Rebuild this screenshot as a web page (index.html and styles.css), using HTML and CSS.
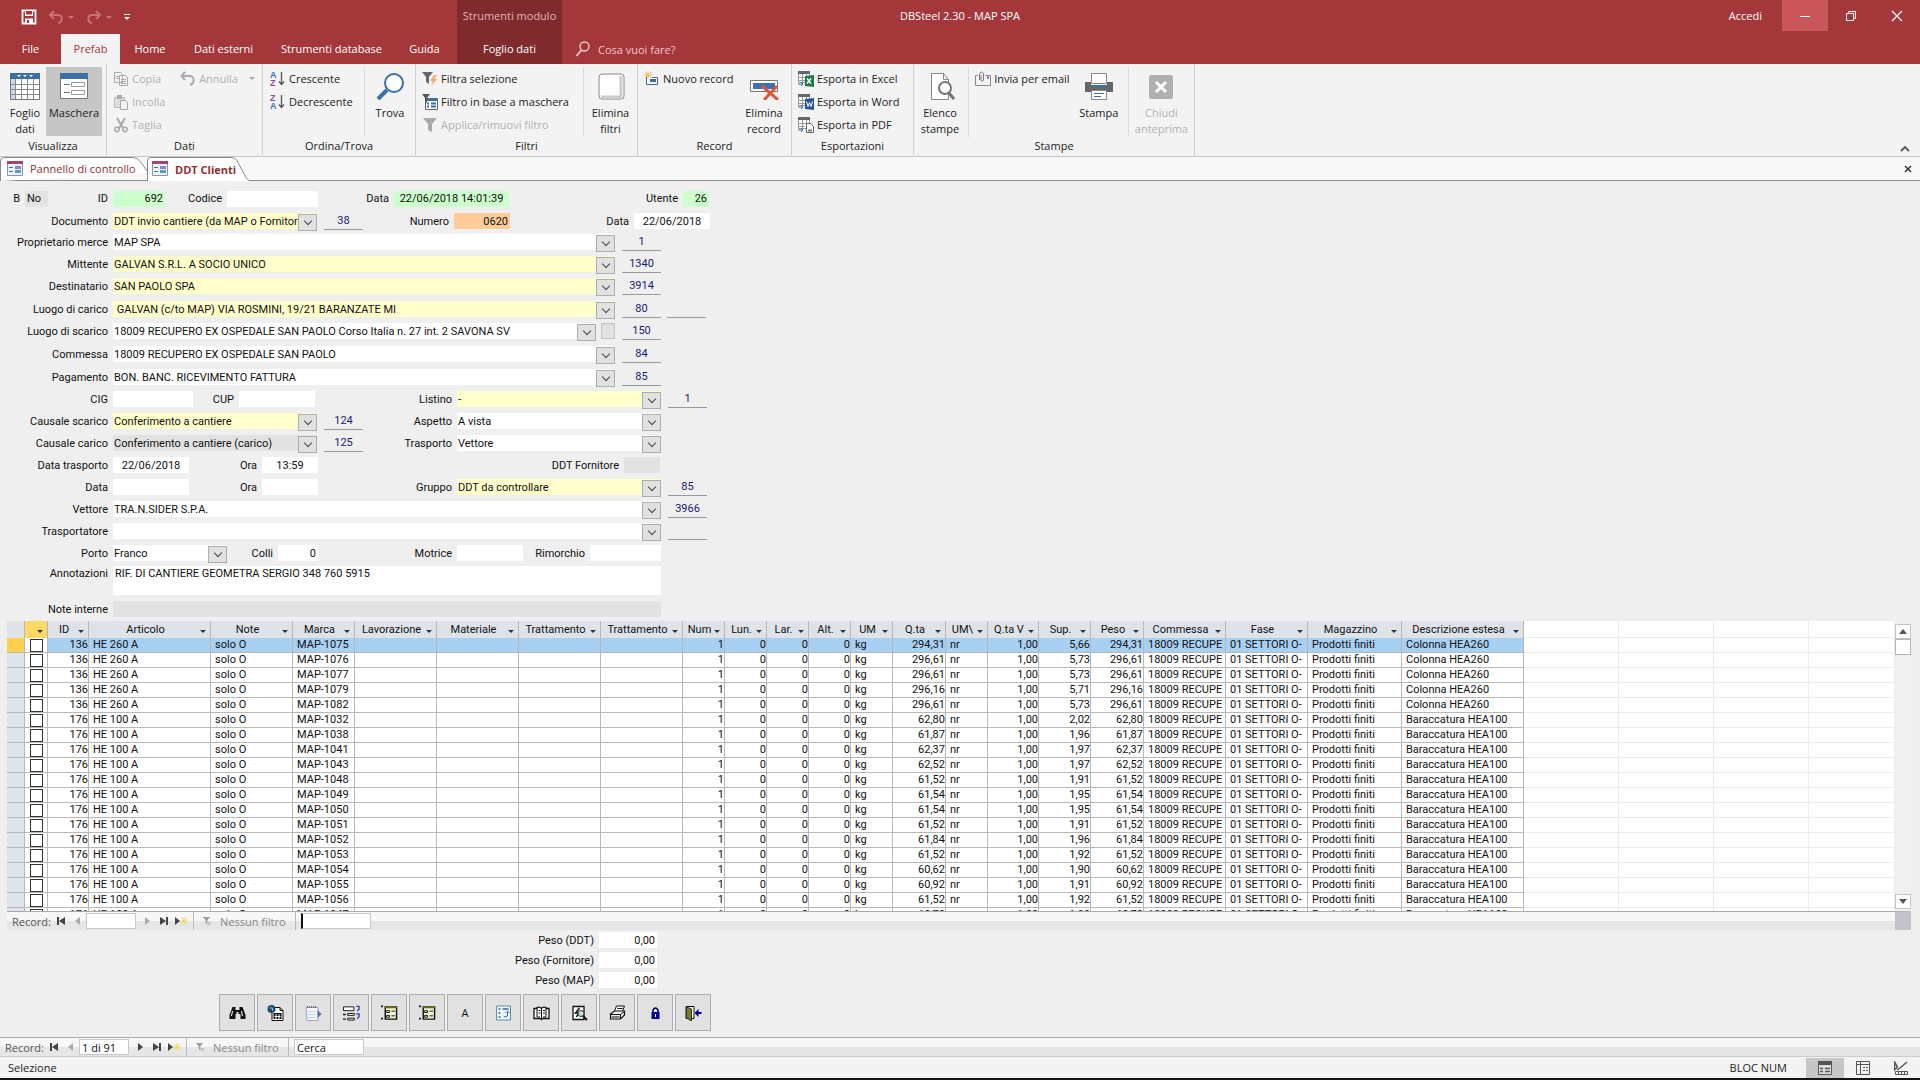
FILE: index.html
```html
<!DOCTYPE html>
<html lang="it">
<head>
    <meta charset="UTF-8">
    <meta name="viewport" content="width=device-width, initial-scale=1.0">
    <title>DBSteel 2.30 - MAP SPA</title>
    <link rel="stylesheet" href="styles.css">
</head>
<body>
    <header class="titlebar">
        <h1 class="title">DBSteel 2.30 - MAP SPA</h1>
        <div class="left">
            <div class="qat">
                <button aria-label="Salva"><svg width="16" height="16" viewBox="0 0 16 16"><path d="M1.500 1.500h13v13h-13z" fill="none" stroke="#fff" stroke-width="1.800"/><path d="M4 2v5h8V2M4 9.500h8V14H4z" fill="#fff"/><path d="M5 2h6v3.500H5z" fill="#a4373a"/><path d="M6 11h2v3H6z" fill="#a4373a"/></svg></button>
                <button class="dim" aria-label="Annulla"><svg width="28" height="16" viewBox="0 0 28 16"><path d="M7 2L3 6l4 4M3 6h8c5 0 5 7 0 8" fill="none" stroke="#c97275" stroke-width="2"/><path d="M21 7h6l-3 3z" fill="#c97275"/></svg></button>
                <button class="dim" aria-label="Ripeti"><svg width="28" height="16" viewBox="0 0 28 16"><path d="M11 2l4 4-4 4M15 6H7c-5 0-5 7 0 8" fill="none" stroke="#c97275" stroke-width="2"/><path d="M21 7h6l-3 3z" fill="#c97275"/></svg></button>
                <button aria-label="Personalizza"><svg width="8" height="16" viewBox="0 0 8 16"><path d="M1 5.500h6" stroke="#fff"/><path d="M1 8h6l-3 3z" fill="#fff"/></svg></button>
            </div>
            <nav class="tabs">
                <a class="tab-file" href="#">File</a>
                <a class="tab-prefab active" href="#">Prefab</a>
                <a class="tab-home" href="#">Home</a>
                <a class="tab-dati" href="#">Dati esterni</a>
                <a class="tab-strumenti" href="#">Strumenti database</a>
                <a class="tab-guida" href="#">Guida</a>
            </nav>
        </div>
        <div class="context">
            <span>Strumenti modulo</span>
            <a href="#">Foglio dati</a>
        </div>
        <div class="right">
            <div class="window">
                <a href="#">Accedi</a>
                <button class="min" aria-label="Riduci a icona"><svg width="12" height="12"><path d="M1 6.500h10" stroke="#fff"/></svg></button>
                <button aria-label="Ripristina"><svg width="12" height="12" viewBox="0 0 12 12"><path d="M1.500 3.500h7v7h-7zM3.500 3V1.500h7v7H9" fill="none" stroke="#fff"/></svg></button>
                <button aria-label="Chiudi"><svg width="12" height="12" viewBox="0 0 12 12"><path d="M1 1l10 10M11 1L1 11" stroke="#fff" stroke-width="1.200"/></svg></button>
            </div>
            <label class="tell"><svg width="16" height="16" viewBox="0 0 16 16"><circle cx="9.500" cy="5.500" r="4.500" fill="none" stroke="#f0c8c9" stroke-width="1.400"/><path d="M6.500 9L1.500 15" stroke="#f0c8c9" stroke-width="1.800"/></svg><input type="text" placeholder="Cosa vuoi fare?" aria-label="Cosa vuoi fare?"></label>
        </div>
    </header>

    <section class="ribbon">
        <div class="group g-visualizza">
            <div class="tools">
                <button class="big w40"><svg width="30" height="27" viewBox="0 0 30 27"><path d="M.5.500h29v26H.5z" fill="#fff" stroke="#777"/><path d="M0 0h30v6H0z" fill="#3e6fa3"/><path d="M1 6h4v20H1z" fill="#c9d9ea"/><path d="M5.500 6v20M11.500 6v20M17.500 6v20M23.500 6v20M1 11.500h28M1 16.500h28M1 21.500h28" stroke="#888"/><path d="M7 2h4l-2 2zM13 2h4l-2 2zM19 2h4l-2 2z" fill="#fff"/></svg>Foglio<br>dati</button>
                <button class="big on w56"><svg width="30" height="27" viewBox="0 0 30 27"><path d="M1.500.500h27v25h-27z" fill="#fff" stroke="#777"/><path d="M1 0h28v6H1z" fill="#3e6fa3"/><path d="M5 11.500h6M5 19.500h6" stroke="#777"/><path d="M12.500 9.500h13v4h-13zM12.500 17.500h13v4h-13z" fill="#fff" stroke="#999"/></svg>Maschera</button>
            </div>
            <h2>Visualizza</h2>
        </div>
        <div class="group g-dati">
            <div class="tools">
                <div class="stack">
                    <button disabled><svg width="16" height="16" viewBox="0 0 16 16"><path d="M1.500 1.500h6l2 2v8h-8zM6.500 4.500h6l2 2v8h-8z" fill="#f3f3f3" stroke="#aaa"/><path d="M8 8.500h5M8 10.500h5M8 12.500h5M3 5.500h3M3 7.500h3" stroke="#aaa"/></svg>Copia</button>
                    <button disabled><svg width="16" height="16" viewBox="0 0 16 16"><path d="M1.500 3.500h10v10h-10z" fill="#ddd" stroke="#bbb"/><path d="M4 1h5v4H4z" fill="#aaa"/><path d="M7.500 6.500h5l2 2v7h-7z" fill="#f3f3f3" stroke="#aaa"/></svg>Incolla</button>
                    <button disabled><svg width="16" height="16" viewBox="0 0 16 16"><path d="M4 1l6 10M12 1L6 11" stroke="#aaa" stroke-width="2"/><circle cx="4" cy="12.500" r="2.200" fill="none" stroke="#aaa" stroke-width="1.500"/><circle cx="12" cy="12.500" r="2.200" fill="none" stroke="#aaa" stroke-width="1.500"/></svg>Taglia</button>
                </div>
                <div class="stack">
                    <button disabled><svg width="16" height="16" viewBox="0 0 16 16"><path d="M5 1L1.500 5 5 9M2 5h7c6 0 6 7 1 9" fill="none" stroke="#aaa" stroke-width="2"/></svg>Annulla<svg class="caret" width="6" height="4"><path d="M0 0h6L3 3z" fill="#aaa"/></svg></button>
                </div>
            </div>
            <h2>Dati</h2>
        </div>
        <div class="group g-ordina">
            <div class="tools">
                <div class="stack">
                    <button><svg width="16" height="16" viewBox="0 0 16 16"><text x="0" y="7" class="az blue">A</text><text x="0" y="15" class="az purple">Z</text><path d="M11.500 1v12M9 10.500l2.500 3 2.500-3" fill="none" stroke="#555" stroke-width="1.300"/></svg>Crescente</button>
                    <button><svg width="16" height="16" viewBox="0 0 16 16"><text x="0" y="7" class="az purple">Z</text><text x="0" y="15" class="az blue">A</text><path d="M11.500 1v12M9 10.500l2.500 3 2.500-3" fill="none" stroke="#555" stroke-width="1.300"/></svg>Decrescente</button>
                </div>
                <button class="big line w51"><svg width="30" height="27" viewBox="0 0 30 27"><circle cx="19" cy="10" r="9" fill="#fff" stroke="#3e6fa3" stroke-width="2"/><path d="M12 17L3 26" stroke="#3e6fa3" stroke-width="4"/></svg>Trova</button>
            </div>
            <h2>Ordina/Trova</h2>
        </div>
        <div class="group g-filtri">
            <div class="tools">
                <div class="stack">
                    <button><svg width="16" height="16" viewBox="0 0 16 16"><path d="M0 1h11L7 6v7l-3-2V6z" fill="#666"/><path d="M12 4l-4 6h3l-2 5 6-7h-3l3-4z" fill="#f0a868"/></svg>Filtra selezione</button>
                    <button><svg width="16" height="16" viewBox="0 0 16 16"><path d="M3.500 4.500h12v11h-12z" fill="#fff" stroke="#666"/><path d="M4 4h11v3H4z" fill="#3e6fa3"/><path d="M9 9.500h5M9 12.500h5M5 9.500h2M5 12.500h2" stroke="#3e6fa3" stroke-width="2"/><path d="M0 0h8L5 4v5L3 8V4z" fill="#555"/></svg>Filtro in base a maschera</button>
                    <button disabled><svg width="16" height="16" viewBox="0 0 16 16"><path d="M1 1h14L10 7v8l-4-2V7z" fill="#aaa"/></svg>Applica/rimuovi filtro</button>
                </div>
                <button class="big line w54"><svg width="30" height="27" viewBox="0 0 30 27"><rect x="3" y="1" width="25" height="25" rx="3" fill="#fff" stroke="#888"/><path d="M25 3v19q0 2-2 2H5" fill="none" stroke="#ccc" stroke-width="3"/></svg>Elimina<br>filtri</button>
            </div>
            <h2>Filtri</h2>
        </div>
        <div class="group g-record">
            <div class="tools">
                <div class="stack">
                    <button><svg width="16" height="16" viewBox="0 0 16 16"><path d="M2.500 6v7.500h11v-7H8" fill="#fff" stroke="#3e6fa3"/><path d="M6 8h6v3H6z" fill="#3e6fa3"/><path d="M4 0v8M0 4h8M1 1l6 6M7 1L1 7" stroke="#f0b84c"/></svg>Nuovo record</button>
                </div>
                <button class="big w54"><svg width="30" height="27" viewBox="0 0 30 27"><path d="M1.500 7.500h27v11h-27z" fill="#fff" stroke="#777"/><path d="M4 10h22v6H4z" fill="#3e6fb3"/><path d="M13 13l16 14M28 13L15 27" stroke="#e0553c" stroke-width="3"/></svg>Elimina<br>record</button>
            </div>
            <h2>Record</h2>
        </div>
        <div class="group g-esportazioni">
            <div class="tools">
                <div class="stack">
                    <button><svg width="16" height="16" viewBox="0 0 16 16"><path d="M.5.500h11v11H.5zM4.500 3v9M8.500 3v9M1 6.500h10M1 9.500h6" fill="#fff" stroke="#999"/><path d="M0 0h12v3H0z" fill="#666"/><path d="M7 5l9-1v12l-9-1z" fill="#1f7a48"/><path d="M9 7.500l4 5M13 7.500l-4 5" stroke="#fff" stroke-width="1.500"/><path d="M0 13h4M3 11l2 2-2 2" fill="none" stroke="#3e6fa3"/></svg>Esporta in Excel</button>
                    <button><svg width="16" height="16" viewBox="0 0 16 16"><path d="M.5.500h11v11H.5zM4.500 3v9M8.500 3v9M1 6.500h10M1 9.500h6" fill="#fff" stroke="#999"/><path d="M0 0h12v3H0z" fill="#666"/><path d="M7 5l9-1v12l-9-1z" fill="#2a5699"/><path d="M8.500 7.500l1.500 5 1.500-4 1.500 4 1.500-5" fill="none" stroke="#fff"/><path d="M0 13h4M3 11l2 2-2 2" fill="none" stroke="#3e6fa3"/></svg>Esporta in Word</button>
                    <button><svg width="16" height="16" viewBox="0 0 16 16"><path d="M.5.500h11v11H.5zM4.500 3v9M8.500 3v9M1 6.500h10M1 9.500h6" fill="#fff" stroke="#999"/><path d="M0 0h12v3H0z" fill="#666"/><path d="M8.500 6.500h4l3 3v6h-7z" fill="#fff" stroke="#666"/><path d="M10 12.500h4v2h-4z" fill="#777"/><path d="M0 13h4M3 11l2 2-2 2" fill="none" stroke="#3e6fa3"/></svg>Esporta in PDF</button>
                </div>
            </div>
            <h2>Esportazioni</h2>
        </div>
        <div class="group g-stampe">
            <div class="tools">
                <button class="big w52"><svg width="30" height="27" viewBox="0 0 30 27"><path d="M6.500.500h12l5 6v20h-17zM18.500.500v6h5" fill="#fff" stroke="#888"/><circle cx="20" cy="15" r="6" fill="#fff" stroke="#777" stroke-width="2"/><path d="M24 20l5 6" stroke="#777" stroke-width="3"/></svg>Elenco<br>stampe</button>
                <div class="stack line">
                    <button><svg width="16" height="16" viewBox="0 0 16 16"><path d="M3 4.500H.5v10h15v-10H10" fill="none" stroke="#888"/><path d="M4.500 9V2.500q2-3 4 0V9q-1.500 3-2.500 0V4" fill="none" stroke="#777"/><path d="M12 6.500h2" stroke="#3e6fa3" stroke-width="2"/></svg>Invia per email</button>
                </div>
                <button class="big w54"><svg width="30" height="27" viewBox="0 0 30 27"><path d="M7.500.500h15v10h-15z" fill="#fff" stroke="#888"/><path d="M1 9h6v3h16V9h6v10H1z" fill="#666"/><path d="M7 12h16v2H7z" fill="#3e6fa3"/><path d="M7.500 17.500h15v9h-15z" fill="#fff" stroke="#888"/><path d="M10 20.500h10M10 23.500h7" stroke="#3e6fa3"/></svg>Stampa</button>
                <button class="big line w66" disabled><svg width="30" height="27" viewBox="0 0 30 27"><rect x="3" y="2" width="24" height="24" rx="2" fill="#b0b0b0"/><path d="M10 9l10 10M20 9L10 19" stroke="#fff" stroke-width="3"/></svg>Chiudi<br>anteprima</button>
            </div>
            <h2>Stampe</h2>
        </div>
        <button class="collapse" aria-label="Comprimi"><svg width="10" height="8" viewBox="0 0 10 8"><path d="M1 6l4-4 4 4" fill="none" stroke="#555" stroke-width="1.800"/></svg></button>
    </section>

    <nav class="docs">
        <a class="doc doc1" href="#"><svg class="shape" width="148" height="24" viewBox="0 0 148 24"><path d="M.5 24V4q0-3.500 3-3.500H133q5 0 8 5l7 10" fill="#fff" stroke="#888"/></svg><svg class="ico" width="16" height="16" viewBox="0 0 16 16"><path d="M.5.500h15v14H.5z" fill="#eef3fa" stroke="#8295b8"/><path d="M0 0h16v3H0z" fill="#a8436c"/><path d="M2 6.500h4M2 10.500h4" stroke="#3e6fb3"/><path d="M8 5h6v3H8zM8 9h6v3H8z" fill="#6f92cc"/></svg>Pannello di controllo</a>
        <a class="doc doc2" href="#"><svg class="shape" width="104" height="24" viewBox="0 0 104 24"><path d="M.5 24V4q0-3.500 3-3.500H84q5 0 7 5l8 15q2 3 4 3.500" fill="#fff" stroke="#888"/></svg><svg class="ico" width="16" height="16" viewBox="0 0 16 16"><path d="M.5.500h15v14H.5z" fill="#eef3fa" stroke="#8295b8"/><path d="M0 0h16v3H0z" fill="#a8436c"/><path d="M2 6.500h4M2 10.500h4" stroke="#3e6fb3"/><path d="M8 5h6v3H8zM8 9h6v3H8z" fill="#6f92cc"/></svg>DDT Clienti</a>
        <button class="close" aria-label="Chiudi scheda"><svg width="8" height="8" viewBox="0 0 8 8"><path d="M1 1l6 6M7 1L1 7" stroke="#333" stroke-width="1.500"/></svg></button>
    </nav>

    <main>
        <form>
            <div class="row first">
                <label class="w20" for="b">B</label><input id="b" class="w23 gray" value="No">
                <label class="w55" for="id">ID</label><input id="id" class="w52 green num" value="692">
                <label class="w52" for="codice">Codice</label><input id="codice" class="w91">
                <label class="w66" for="creato">Data</label><input id="creato" class="w115 green mid" value="22/06/2018 14:01:39">
                <label class="w164" for="utente">Utente</label><input id="utente" class="w26 green num" value="26">
            </div>
            <div class="row second">
                <label class="w108" for="documento">Documento</label><span class="combo w204 yellow"><select id="documento"><option>DDT invio cantiere (da MAP o Fornitore</option></select></span><output>38</output>
                <label class="w82" for="numero">Numero</label><input id="numero" class="w56 orange num" value="0620">
                <label class="w114" for="data">Data</label><input id="data" class="w76 mid" value="22/06/2018">
            </div>
            <div class="row">
                <label class="w108" for="proprietario">Proprietario merce</label><span class="combo w502"><select id="proprietario"><option>MAP SPA</option></select></span><output>1</output>
            </div>
            <div class="row">
                <label class="w108" for="mittente">Mittente</label><span class="combo w502 yellow"><select id="mittente"><option>GALVAN S.R.L. A SOCIO UNICO</option></select></span><output>1340</output>
            </div>
            <div class="row">
                <label class="w108" for="destinatario">Destinatario</label><span class="combo w502 yellow"><select id="destinatario"><option>SAN PAOLO SPA</option></select></span><output>3914</output>
            </div>
            <div class="row gap">
                <label class="w108" for="carico">Luogo di carico</label><span class="combo w502 yellow"><select id="carico"><option>&nbsp;GALVAN (c/to MAP) VIA ROSMINI, 19/21 BARANZATE MI</option></select></span><output>80</output><output></output>
            </div>
            <div class="row">
                <label class="w108" for="scarico">Luogo di scarico</label><span class="combo w483"><select id="scarico"><option>18009 RECUPERO EX OSPEDALE SAN PAOLO Corso Italia n. 27 int. 2 SAVONA SV</option></select></span><button type="button" class="mini" aria-label="Apri luogo"></button><output>150</output>
            </div>
            <div class="row gap">
                <label class="w108" for="commessa">Commessa</label><span class="combo w502"><select id="commessa"><option>18009 RECUPERO EX OSPEDALE SAN PAOLO</option></select></span><output>84</output>
            </div>
            <div class="row gap">
                <label class="w108" for="pagamento">Pagamento</label><span class="combo w502"><select id="pagamento"><option>BON. BANC. RICEVIMENTO FATTURA</option></select></span><output>85</output>
            </div>
            <div class="row">
                <label class="w108" for="cig">CIG</label><input id="cig" class="w80">
                <label class="w36" for="cup">CUP</label><input id="cup" class="w76">
                <label class="w132" for="listino">Listino</label><span class="combo w204 yellow"><select id="listino"><option>-</option></select></span><output>1</output>
            </div>
            <div class="row">
                <label class="w108" for="causale1">Causale scarico</label><span class="combo w204 yellow"><select id="causale1"><option>Conferimento a cantiere</option></select></span><output>124</output>
                <label class="w85" for="aspetto">Aspetto</label><span class="combo w204"><select id="aspetto"><option>A vista</option></select></span>
            </div>
            <div class="row">
                <label class="w108" for="causale2">Causale carico</label><span class="combo w204 gray"><select id="causale2"><option>Conferimento a cantiere (carico)</option></select></span><output>125</output>
                <label class="w85" for="trasporto">Trasporto</label><span class="combo w204"><select id="trasporto"><option>Vettore</option></select></span>
            </div>
            <div class="row">
                <label class="w108" for="datatr">Data trasporto</label><input id="datatr" class="w76 mid" value="22/06/2018">
                <label class="w63" for="ora">Ora</label><input id="ora" class="w56 mid" value="13:59">
                <label class="w296" for="ddtf">DDT Fornitore</label><input id="ddtf" class="w36 gray">
            </div>
            <div class="row">
                <label class="w108" for="data2">Data</label><input id="data2" class="w76">
                <label class="w63" for="ora2">Ora</label><input id="ora2" class="w56">
                <label class="w129" for="gruppo">Gruppo</label><span class="combo w204 yellow"><select id="gruppo"><option>DDT da controllare</option></select></span><output>85</output>
            </div>
            <div class="row">
                <label class="w108" for="vettore">Vettore</label><span class="combo w548"><select id="vettore"><option>TRA.N.SIDER S.P.A.</option></select></span><output>3966</output>
            </div>
            <div class="row">
                <label class="w108" for="trasportatore">Trasportatore</label><span class="combo w548"><select id="trasportatore"><option></option></select></span><output></output>
            </div>
            <div class="row">
                <label class="w108" for="porto">Porto</label><span class="combo w114"><select id="porto"><option>Franco</option></select></span>
                <label class="w41" for="colli">Colli</label><input id="colli" class="w40 num" value="0">
                <label class="w129" for="motrice">Motrice</label><input id="motrice" class="w66">
                <label class="w57" for="rimorchio">Rimorchio</label><input id="rimorchio" class="w71">
            </div>
            <div class="row notes">
                <label class="w108" for="annotazioni">Annotazioni</label><textarea id="annotazioni" class="w548">RIF. DI CANTIERE GEOMETRA SERGIO 348 760 5915</textarea>
            </div>
            <div class="row">
                <label class="w108" for="interne">Note interne</label><input id="interne" class="w548 gray">
            </div>
        </form>

        <section class="sheet">
            <div class="grid">
                <div class="rows">
                    <table>
                        <colgroup id="cols"></colgroup>
                        <thead><tr id="head"></tr></thead>
                        <tbody id="body"></tbody>
                    </table>
                </div>
                <div class="scroll">
                    <button aria-label="Su"><svg width="8" height="5"><path d="M0 5h8L4 0z" fill="#555"/></svg></button>
                    <div class="thumb"></div>
                    <button class="down" aria-label="Giù"><svg width="8" height="5"><path d="M0 0h8L4 5z" fill="#555"/></svg></button>
                </div>
            </div>
            <div class="recnav" id="subnav"></div>
        </section>

        <section class="totals">
            <div><label for="peso1">Peso (DDT)</label><input id="peso1" class="w58 num" value="0,00"></div>
            <div><label for="peso2">Peso (Fornitore)</label><input id="peso2" class="w58 num" value="0,00"></div>
            <div><label for="peso3">Peso (MAP)</label><input id="peso3" class="w58 num" value="0,00"></div>
        </section>

        <div class="actions">
            <button aria-label="Cerca"><svg viewBox="0 0 16 16"><path d="M3 2h3v3h4V2h3l3 8v4h-5V9H9v-2H7v2H6v5H0v-4z" fill="#111"/><path d="M3 6l-1 5M12 6l1 5" stroke="#fff"/></svg></button>
            <button aria-label="Web"><svg viewBox="0 0 16 16"><path d="M4.500 2.500h8l3 3v10h-11zM12.500 2.500v3h3" fill="#fff" stroke="#111"/><circle cx="4" cy="4" r="4" fill="#1c4c6e"/><path d="M2 3h3v3" stroke="#7fc4c4" fill="none"/><path d="M6 8h8v6H6z" fill="#111"/><path d="M8.500 9v5M11.500 9v5M7 11.500h6" stroke="#fff"/></svg></button>
            <button aria-label="Appunti"><svg viewBox="0 0 16 16"><path d="M.5 2.500h12v13h-11z" fill="#f3f6ff" stroke="#9aa8d0"/><path d="M2 1v2M4 1v2M6 1v2M8 1v2M10 1v2" stroke="#667"/><path d="M2 6.500h8M2 9.500h8M2 12.500h8" stroke="#c5d0ee"/><path d="M12 5l4 4-4 4z" fill="#5a6fb0"/></svg></button>
            <button aria-label="Ordina"><svg viewBox="0 0 18 16"><path d="M.5 1.500h11v4H.5zM5 8.500h7v2H5zM5 13.500h7v2H5z" fill="#fff" stroke="#111"/><path d="M0 9.500h3M0 14.500h3" stroke="#111" stroke-width="1.500"/><path d="M14 1h3v3l-2 2M14 9h3v3l-2 2" fill="none" stroke="#3a46b8" stroke-width="1.500"/></svg></button>
            <button aria-label="Scheda"><svg viewBox="0 0 18 16"><path d="M4.500 1.500h12v13h-12z" fill="#f4f4d8" stroke="#111" stroke-width="1.500"/><path d="M4 1h13v2H4z" fill="#6b6b1c"/><path d="M6 5.500h3v2H6zM6 10.500h3v2H6zM11 6h4M11 11h4" fill="none" stroke="#111"/><path d="M0 1h2M0 14h2" stroke="#111" stroke-width="2"/></svg></button>
            <button aria-label="Scheda 2"><svg viewBox="0 0 18 16"><path d="M4.500 1.500h12v13h-12z" fill="#f4f4d8" stroke="#111" stroke-width="1.500"/><path d="M4 1h13v2H4z" fill="#6b6b1c"/><path d="M6 5.500h3v2H6zM6 10.500h3v2H6zM11 6h4M11 11h4" fill="none" stroke="#111"/><path d="M0 1h2M0 14h2" stroke="#111" stroke-width="2"/></svg></button>
            <button>A</button>
            <button aria-label="Aggiorna"><svg viewBox="0 0 16 16"><path d="M1 1h14v14H1z" fill="#eef5fb" stroke="#5c8cb8"/><path d="M3 4h2M7 4h6M3 8h2M3 12h2" stroke="#5c8cb8" stroke-width="2"/><path d="M12 7v4q-3 2-4 0M10 8l2-2 2 2" fill="none" stroke="#3e6fa3"/></svg></button>
            <button aria-label="Rubrica"><svg viewBox="0 0 16 16"><path d="M.5 3.500h3v-1q3-1 4.500 1 1.500-2 4.500-1v1h3v10H9l-1 1-1-1H.5z" fill="#fff" stroke="#111" stroke-width="1.300"/><path d="M8 4v10M3.500 4v8h3M12.500 4v8h-3M5 5.500h2M5 8h2M9.500 5.500h2M9.500 8h2" fill="none" stroke="#111"/></svg></button>
            <button aria-label="Anteprima"><svg viewBox="0 0 16 16"><path d="M1.500 1.500h11v13h-11z" fill="#fff" stroke="#111" stroke-width="1.300"/><path d="M8 3L4 8h3l-2 4" fill="none" stroke="#111" stroke-width="1.500"/><circle cx="9.500" cy="8.500" r="3" fill="#bfe0e0" stroke="#333"/><path d="M11.500 11l4 4" stroke="#111" stroke-width="2"/></svg></button>
            <button aria-label="Stampa"><svg viewBox="0 0 16 16"><path d="M5 6l2-5h8l-2 5" fill="#fff" stroke="#111"/><path d="M1 9l4-3h10v4l-4 4H1z" fill="#eee" stroke="#111" stroke-width="1.200"/><path d="M1 9.500h10l4-3M11 9.500V14M8 3.500h5M2 12h8" fill="none" stroke="#111"/></svg></button>
            <button aria-label="Blocca"><svg viewBox="0 0 16 16"><path d="M5.500 8V5q2.500-4 5 0v3" fill="none" stroke="#00008b" stroke-width="1.500"/><path d="M4 7h8v7H4z" fill="#00008b"/><path d="M8 9v3" stroke="#fff"/></svg></button>
            <button aria-label="Esci"><svg viewBox="0 0 16 16"><path d="M.5 1.500h8v12h-8z" fill="#fff" stroke="#111"/><path d="M1 2l5 2v12l-5-3z" fill="#7c7c20" stroke="#333"/><path d="M9 8l4-4v3h3v2h-3v3z" fill="#00008b"/></svg></button>
        </div>

        <div class="recnav bottom" id="mainnav"></div>
    </main>

    <footer>
        <span>Selezione</span>
        <span class="numlock">BLOC NUM</span>
        <button class="on" aria-label="Visualizzazione Maschera"><svg width="14" height="14" viewBox="0 0 14 14"><path d="M.5.500h13v13H.5z" fill="#ddd" stroke="#555"/><path d="M0 0h14v4H0z" fill="#555"/><path d="M2 7.500h3M7 7.500h5M2 10.500h3M7 10.500h5" stroke="#555" stroke-width="1.500"/></svg></button>
        <button aria-label="Visualizzazione Layout"><svg width="14" height="14" viewBox="0 0 14 14"><path d="M.5.500h13v13H.5zM4.500.500v13M.5 3.500h13M7 6.500h2M10 6.500h2M7 9.500h2M10 9.500h2" fill="none" stroke="#555"/></svg></button>
        <button aria-label="Visualizzazione Struttura"><svg width="14" height="14" viewBox="0 0 14 14"><path d="M.5 1v8l3-3zM13 1L6 7l-3 2" fill="none" stroke="#555" stroke-width="1.500"/><path d="M1.500 10.500h12v3h-12zM4.500 11v2M7.500 11v2M10.500 11v2" fill="none" stroke="#555"/></svg></button>
    </footer>

    <script>
        // colonne del foglio dati: titolo, larghezza, allineamento
        const columns = [
            ['', 18, 'sel'], ['', 23, 'check'], ['ID', 41, 'num'], ['Articolo', 122, ''], ['Note', 82, ''],
            ['Marca', 62, ''], ['Lavorazione', 82, ''], ['Materiale', 82, ''], ['Trattamento', 82, ''],
            ['Trattamento', 82, ''], ['Num', 42, 'num'], ['Lun.', 42, 'num'], ['Lar.', 42, 'num'],
            ['Alt.', 42, 'num'], ['UM', 42, ''], ['Q.ta', 53, 'num'], ['UM\\', 42, ''], ['Q.ta V', 51, 'num'],
            ['Sup.', 52, 'num'], ['Peso', 53, 'num'], ['Commessa', 82, ''], ['Fase', 82, ''],
            ['Magazzino', 94, ''], ['Descrizione estesa', 122, '']
        ];

        // id, marca, quantità, superficie
        const records = [
            [136, 1075, '294,31', '5,66'], [136, 1076, '296,61', '5,73'], [136, 1077, '296,61', '5,73'],
            [136, 1079, '296,16', '5,71'], [136, 1082, '296,61', '5,73'], [176, 1032, '62,80', '2,02'],
            [176, 1038, '61,87', '1,96'], [176, 1041, '62,37', '1,97'], [176, 1043, '62,52', '1,97'],
            [176, 1048, '61,52', '1,91'], [176, 1049, '61,54', '1,95'], [176, 1050, '61,54', '1,95'],
            [176, 1051, '61,52', '1,91'], [176, 1052, '61,84', '1,96'], [176, 1053, '61,52', '1,92'],
            [176, 1054, '60,62', '1,90'], [176, 1055, '60,92', '1,91'], [176, 1056, '61,52', '1,92'],
            [176, 1047, '60,70', '1,90']
        ];

        const filler = '<td class="fill"></td>'.repeat(4);

        function loadSheet() {
            document.getElementById('cols').innerHTML =
                columns.map(c => `<col style="width:${c[1]}px">`).join('') +
                '<col class="c95"><col class="c95"><col class="c95"><col>';

            document.getElementById('head').innerHTML = columns.map(c =>
                `<th class="${c[2]}"><div><span>${c[0]}</span>${c[2] === 'sel' ? '' : '<i></i>'}</div></th>`
            ).join('') + filler;

            document.getElementById('body').innerHTML = records.map((r, i) => {
                const big = r[0] === 136;
                const cells = ['', `<input type="checkbox" aria-label="Seleziona MAP-${r[1]}">`, r[0],
                    big ? 'HE 260 A' : 'HE 100 A', 'solo O', 'MAP-' + r[1], '', '', '', '', 1, 0, 0, 0, 'kg',
                    r[2], 'nr', '1,00', r[3], r[2], '18009 RECUPE', '01 SETTORI O-', 'Prodotti finiti',
                    big ? 'Colonna HEA260' : 'Baraccatura HEA100'];
                return `<tr class="${i === 0 ? 'current' : ''}">` +
                    cells.map((c, n) => `<td class="${columns[n][2]}">${c}</td>`).join('') + filler + '</tr>';
            }).join('');
        }

        // barra di navigazione dei record
        function recordNav(id, position, search, enabled) {
            const off = enabled ? '#444' : '#aaa';
            document.getElementById(id).innerHTML = `
                <div class="nav">
                    <span class="rec">Record:</span>
                    <button aria-label="Primo"><svg width="8" height="8"><path d="M0 0h2v8H0zM8 0v8L2 4z" fill="#444"/></svg></button>
                    <button class="prev" aria-label="Precedente"><svg width="5" height="8"><path d="M5 0v8L0 4z" fill="#aaa"/></svg></button>
                    <input class="pos" aria-label="Record corrente" value="${position}">
                    <button class="next" aria-label="Successivo"><svg width="5" height="8"><path d="M0 0v8l5-4z" fill="${off}"/></svg></button>
                    <button aria-label="Ultimo"><svg width="8" height="8"><path d="M6 0h2v8H6zM0 0v8l6-4z" fill="#444"/></svg></button>
                    <button class="new" aria-label="Nuovo"><svg width="13" height="10" viewBox="0 0 13 10"><path d="M0 1v8l5-4z" fill="#444"/><path d="M9 1v8M5 5h8M6 2l6 6M12 2L6 8" stroke="#f0d860"/></svg></button>
                </div>
                <div class="filter"><svg width="9" height="8" viewBox="0 0 9 8"><path d="M0 0h7L4 3v4L3 6V3zM5 5l3 3M8 5L5 8" fill="#999" stroke="#aaa"/></svg>Nessun filtro</div>
                <div class="find"><input class="${search ? '' : 'cursor'}" aria-label="Cerca" value="${search}"></div>`;
        }

        loadSheet();
        recordNav('subnav', '', '', false);
        recordNav('mainnav', '1 di 91', 'Cerca', true);
    </script>
</body>
</html>
```
FILE: styles.css
```css
* {
    box-sizing: border-box;
}
body {
    margin: 0;
    height: 100vh;
    display: flex;
    flex-direction: column;
    overflow: hidden;
    background: #efefef;
    color: #222;
    font-family: 'Open Sans', sans-serif;
    font-size: 11px;
}
button, input, select, textarea {
    font: inherit;
    color: inherit;
    border: 0;
    border-radius: 0;
    padding: 0;
    margin: 0;
    background: none;
}
a {
    color: inherit;
    text-decoration: none;
}
h1, h2 {
    margin: 0;
    font-size: 11px;
    font-weight: normal;
}

/* barra del titolo */
.titlebar {
    position: relative;
    display: flex;
    height: 64px;
    background: #a4373a;
    color: #fff;
}
.title {
    position: absolute;
    left: 0;
    right: 0;
    top: 0;
    line-height: 32px;
    text-align: center;
    pointer-events: none;
}
.left {
    width: 457px;
}
.qat {
    display: flex;
    align-items: center;
    gap: 7px;
    height: 34px;
    padding-left: 21px;
}
.qat button {
    display: flex;
}
.qat .dim {
    margin-left: 3px;
}
.qat button:last-child {
    margin-left: 3px;
}
.tabs {
    display: flex;
    line-height: 30px;
    text-align: center;
}
.tab-file { width: 61px; }
.tab-prefab { width: 59px; }
.tab-home { width: 60px; }
.tab-dati { width: 87px; }
.tab-strumenti { width: 129px; }
.tab-guida { width: 57px; }
.tabs .active {
    background: #f3f3f3;
    color: #a4373a;
}
.context {
    width: 105px;
    background: #7f2a2d;
    text-align: center;
}
.context span {
    display: block;
    height: 34px;
    line-height: 32px;
    color: #e6b3b5;
}
.context a {
    display: block;
    line-height: 30px;
}
.right {
    flex: 1;
}
.window {
    display: flex;
    justify-content: flex-end;
    height: 34px;
    line-height: 32px;
}
.window a {
    padding-right: 20px;
}
.window button {
    width: 46px;
    height: 31px;
    display: flex;
    align-items: center;
    justify-content: center;
}
.window .min {
    background: #c8565a;
}
.tell {
    display: flex;
    align-items: center;
    gap: 7px;
    height: 30px;
    padding-left: 13px;
}
.tell input::placeholder {
    color: #f0c8c9;
}

/* barra multifunzione */
.ribbon {
    display: flex;
    height: 93px;
    background: #f3f3f3;
    border-bottom: 1px solid #c6c6c6;
}
.group {
    display: flex;
    flex-direction: column;
    border-right: 1px solid #d0d0d0;
    margin-bottom: 1px;
}
.group h2 {
    line-height: 18px;
    text-align: center;
}
.tools {
    display: flex;
    justify-content: space-between;
    height: 75px;
    padding-top: 3px;
}
.g-visualizza { width: 107px; }
.g-visualizza .tools { padding-left: 5px; padding-right: 4px; }
.g-dati { width: 156px; }
.g-dati .tools { padding-left: 6px; padding-right: 7px; }
.g-ordina { width: 153px; }
.g-ordina .tools { padding-left: 7px; }
.g-filtri { width: 222px; }
.g-filtri .tools { padding-left: 6px; }
.g-record { width: 154px; }
.g-record .tools { padding-left: 6px; }
.g-esportazioni { width: 122px; }
.g-esportazioni .tools { padding-left: 6px; }
.g-stampe { width: 281px; }
.big {
    display: flex;
    flex-direction: column;
    justify-content: flex-start;
    height: 69px;
    line-height: 16px;
    text-align: center;
    padding-top: 6px;
}
.big {
    display: block;
}
.big svg {
    display: block;
    margin: 0 auto 5px;
}
.big.on {
    background: #c6c6c6;
}
.big:not(:has(br)) {
    padding-bottom: 16px;
}
.line {
    border-left: 1px solid #dadada;
    padding-left: 6px;
}
.big.line {
    padding-left: 0;
}
.stack button {
    display: flex;
    align-items: center;
    gap: 3px;
    height: 23px;
    white-space: nowrap;
}
button:disabled {
    color: #b1b1b1;
}
.caret {
    margin-left: 8px;
}
.az {
    font: bold 9px 'Liberation Sans', sans-serif;
}
.blue { fill: #3e6fb3; }
.purple { fill: #8a4a9c; }
.collapse {
    margin: 77px 10px 0 auto;
    height: 12px;
}

/* schede dei documenti */
.docs {
    position: relative;
    z-index: 0;
    display: flex;
    height: 24px;
    background: #f8f8f8;
    border-bottom: 1px solid #8a8a8a;
    color: #8e2f33;
}
.doc {
    position: relative;
    display: flex;
    align-items: center;
    gap: 7px;
    height: 24px;
    padding-left: 7px;
}
.doc1 {
    width: 147px;
    height: 23px;
}
.doc2 {
    width: 104px;
    padding-left: 5px;
    font-weight: bold;
}
.shape {
    position: absolute;
    left: 0;
    top: 0;
    z-index: -1;
}
.close {
    margin-left: auto;
    padding-right: 8px;
}

/* maschera */
main {
    flex: 1;
    min-height: 0;
    display: flex;
    flex-direction: column;
    color: #111;
}
form, .totals, table {
    font-family: Roboto, 'Liberation Sans', sans-serif;
    font-size: 11px;
}
form {
    padding: 5px 0 1px;
}
.row {
    display: flex;
    align-items: center;
    gap: 5px;
    height: 22px;
}
.first { height: 25px; }
.second { height: 20px; }
.gap { margin-top: 1px; }
.row label {
    text-align: right;
    white-space: nowrap;
}
.row input, .combo, .totals input {
    height: 16px;
    background: #fff;
    padding: 0 2px;
}
.row .green { background: #ccffcc; }
.row .yellow { background: #ffffcc; }
.row .orange { background: #ffcc99; }
.row .gray { background: #e2e2e2; }
input.num { text-align: right; }
input.mid { text-align: center; }
.row .combo {
    position: relative;
    display: block;
    padding: 0 0 0 1px;
}
.combo select {
    display: block;
    width: 100%;
    height: 17px;
    padding-right: 14px;
    appearance: none;
    line-height: 17px;
}
.combo::before {
    content: '';
    position: absolute;
    right: 0;
    top: 1px;
    width: 17px;
    height: 15px;
    background: #e1e1e1;
    border: 1px solid #adadad;
    pointer-events: none;
}
.combo::after {
    content: '';
    position: absolute;
    right: 6px;
    top: 5px;
    width: 5px;
    height: 5px;
    border: solid #444;
    border-width: 0 1px 1px 0;
    transform: rotate(45deg);
    pointer-events: none;
}
.row output {
    width: 39px;
    height: 18px;
    margin: 0 -1px 0 2px;
    line-height: 17px;
    border-bottom: 1px solid #999;
    color: #1a1a7a;
    text-align: center;
}
.mini {
    width: 14px;
    height: 16px;
    background: #e1e1e1;
    border: 1px solid #c4c4c4;
}
.notes {
    height: 34px;
    align-items: flex-start;
    padding-top: 2px;
}
.notes label {
    line-height: 16px;
}
.notes textarea {
    height: 29px;
    background: #fff;
    padding: 0 2px;
    line-height: 16px;
    resize: none;
    overflow: hidden;
}
.w20 { width: 20px; }
.w23 { width: 23px; }
.w26 { width: 26px; }
.w36 { width: 36px; }
.w40 { width: 40px; }
.w41 { width: 41px; }
.w51 { width: 51px; }
.w52 { width: 52px; }
.w54 { width: 54px; }
.w55 { width: 55px; }
.w56 { width: 56px; }
.w57 { width: 57px; }
.w58 { width: 58px; }
.w63 { width: 63px; }
.w66 { width: 66px; }
.w71 { width: 71px; }
.w76 { width: 76px; }
.w80 { width: 80px; }
.w82 { width: 82px; }
.w85 { width: 85px; }
.w91 { width: 91px; }
.w108 { width: 108px; }
.w114 { width: 114px; }
.w115 { width: 115px; }
.w129 { width: 129px; }
.w132 { width: 132px; }
.w164 { width: 164px; }
.w204 { width: 204px; }
.w296 { width: 296px; }
.w483 { width: 483px; }
.w502 { width: 502px; }
.w548 { width: 548px; }

/* foglio dati */
.sheet {
    flex: 1;
    min-height: 0;
    display: flex;
    flex-direction: column;
    margin: 0 9px 0 7px;
}
.grid {
    flex: 1;
    min-height: 0;
    display: flex;
    background: #fff;
}
.rows {
    flex: 1;
    overflow: hidden;
}
table {
    width: 100%;
    table-layout: fixed;
    border-collapse: separate;
    border-spacing: 0;
}
.c95 { width: 95px; }
th, td {
    height: 15px;
    padding: 0 0 0 4px;
    line-height: 14px;
    white-space: nowrap;
    overflow: hidden;
    border-right: 1px solid #b8b8b8;
    border-bottom: 1px solid #b8b8b8;
}
th {
    height: 17px;
    padding: 0 2px;
    background: #dfe3e8;
    font-weight: normal;
    border-bottom: 0;
}
th div {
    display: flex;
    align-items: center;
}
th span {
    flex: 1;
    overflow: hidden;
}
th i {
    border: 3px solid transparent;
    border-top-color: #333;
    border-bottom: 0;
    margin: 3px 2px 0 0;
}
td.num {
    text-align: right;
}
th.check {
    background: #ffd966;
}
td.sel {
    background: #dfe3ec;
}
.check {
    padding: 0 2px;
    text-align: center;
}
td input {
    appearance: none;
    display: block;
    width: 13px;
    height: 13px;
    margin: 0 auto;
    background: #fff;
    border: 1px solid #333;
}
.current td {
    background: #a8d0f2;
}
.current .sel {
    background: #ffd04d;
}
.current .check {
    background: #fff;
}
tr td.fill {
    background: #fff;
    border-color: #ececec;
}
.scroll {
    width: 16px;
    display: flex;
    flex-direction: column;
    background: #f0f0f0;
}
.scroll button {
    display: flex;
    align-items: center;
    justify-content: center;
    height: 15px;
    margin-top: 3px;
    background: #fff;
    border: 1px solid #c4c4c4;
}
.scroll .down {
    margin: auto 0 2px;
}
.thumb {
    height: 16px;
    background: #fff;
    border: 1px solid #b4b4b4;
}

/* navigazione record */
.recnav {
    display: flex;
    align-items: center;
    height: 19px;
    background: linear-gradient(#f7f7f7 50%, #e6e6e6 50%);
    border-top: 1px solid #aaa;
    border-right: 16px solid #c3c3c9;
    color: #555;
}
.recnav button {
    display: flex;
}
.nav {
    display: flex;
    align-items: center;
    gap: 10px;
    width: 187px;
    height: 100%;
    padding-left: 5px;
    border-right: 1px solid #bbb;
}
.rec {
    width: 35px;
}
.recnav input {
    height: 16px;
    padding: 0 2px;
    background: #fff;
    border: 1px solid #c8c8c8;
    color: #111;
}
.pos {
    width: 50px;
    margin-right: -1px;
}
.prev {
    margin-right: -4px;
}
.new {
    margin-left: -3px;
}
.filter {
    display: flex;
    align-items: center;
    gap: 8px;
    width: 102px;
    height: 100%;
    padding-left: 9px;
    border-right: 1px solid #bbb;
    color: #888;
}
.find {
    padding-left: 5px;
}
.find input {
    width: 70px;
}
.recnav .cursor {
    border-left: 2px solid #111;
}
.bottom {
    border-right: 0;
}

.totals {
    width: 657px;
    height: 64px;
}
.totals div {
    display: flex;
    align-items: center;
    justify-content: flex-end;
    gap: 5px;
    height: 20px;
}
.actions {
    display: flex;
    gap: 2px;
    height: 43px;
    padding-left: 219px;
}
.actions button {
    display: flex;
    align-items: center;
    justify-content: center;
    width: 36px;
    height: 37px;
    background: #e1e1e1;
    border: 1px solid #adadad;
}
.actions svg {
    width: 17px;
    height: 16px;
}

footer {
    display: flex;
    align-items: center;
    height: 24px;
    padding-left: 8px;
    background: #f3f3f3;
    border-top: 1px solid #ccc;
    border-bottom: 2px solid #15131a;
}
.numlock {
    margin-left: auto;
    padding-right: 19px;
}
footer button {
    display: flex;
    align-items: center;
    justify-content: center;
    width: 38px;
    height: 20px;
}
footer .on {
    background: #c6c6c6;
}
```
